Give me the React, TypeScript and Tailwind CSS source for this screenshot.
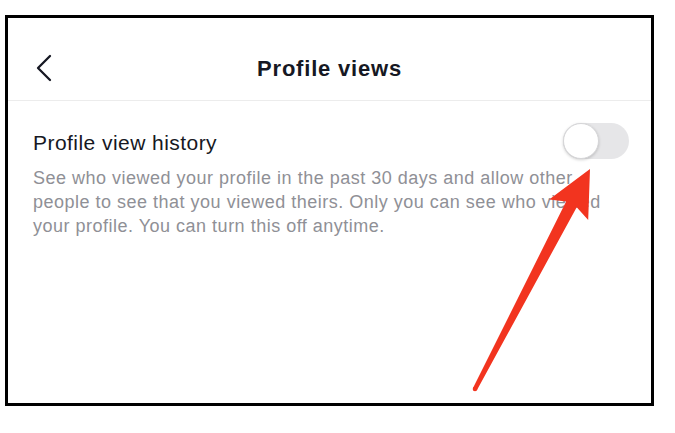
import React from 'react';

const Chevron = () => (
  <svg width="18" height="28" viewBox="0 0 18 28" fill="none">
    <polyline points="15,2 3,14 15,26" stroke="#161823" strokeWidth="2.3" strokeLinecap="round" strokeLinejoin="round" />
  </svg>
);

const Toggle = () => (
  <div className="relative w-[66px] h-[36px] rounded-full bg-[#e6e6e8] shrink-0">
    <div className="absolute left-0 top-0 w-[36px] h-[36px] rounded-full bg-white border border-[#d6d6d8] shadow-[0_1px_3px_rgba(0,0,0,0.18)]" />
  </div>
);

// red annotation arrow drawn over the screenshot
const Arrow = () => (
  <svg className="absolute inset-0 pointer-events-none" width="675" height="433" viewBox="0 0 675 433">
    <polygon
      points="590,169 588.2,220 576.7,207.2 477,390 473,388 566.1,201.6 549.2,199.6"
      fill="#f2341f"
    />
    <circle cx="475" cy="389" r="2.3" fill="#f2341f" />
  </svg>
);

export default function App() {
  return (
    <div
      className="relative w-[675px] h-[433px] bg-white pt-[15px] pl-[5px]"
      style={{ fontFamily: '"Liberation Sans", Arial, sans-serif' }}
    >
      <div className="w-[649px] h-[391px] border-[3px] border-black flex flex-col">
        <div className="h-[83px] pt-[18px] grid grid-cols-[1fr_auto_1fr] items-center border-b border-[#ececec]">
          <div className="pl-[27px]">
            <Chevron />
          </div>
          <h1 className="text-[22px] font-bold tracking-[0.8px] text-[#161823]">Profile views</h1>
          <div />
        </div>

        <div className="pl-[25px] pr-[22px] pt-[26px]">
          <div className="flex items-center justify-between">
            <span className="text-[21px] leading-[24px] tracking-[0.45px] text-[#161823]">Profile view history</span>
            <div className="-mt-[4px]">
              <Toggle />
            </div>
          </div>
          <p className="mt-[7px] text-[18px] leading-[24px] tracking-[0.5px] text-[#8f9096]">
            See who viewed your profile in the past 30 days and allow other
            <br />
            people to see that you viewed theirs. Only you can see who viewed
            <br />
            your profile. You can turn this off anytime.
          </p>
        </div>
      </div>
      <Arrow />
    </div>
  );
}
